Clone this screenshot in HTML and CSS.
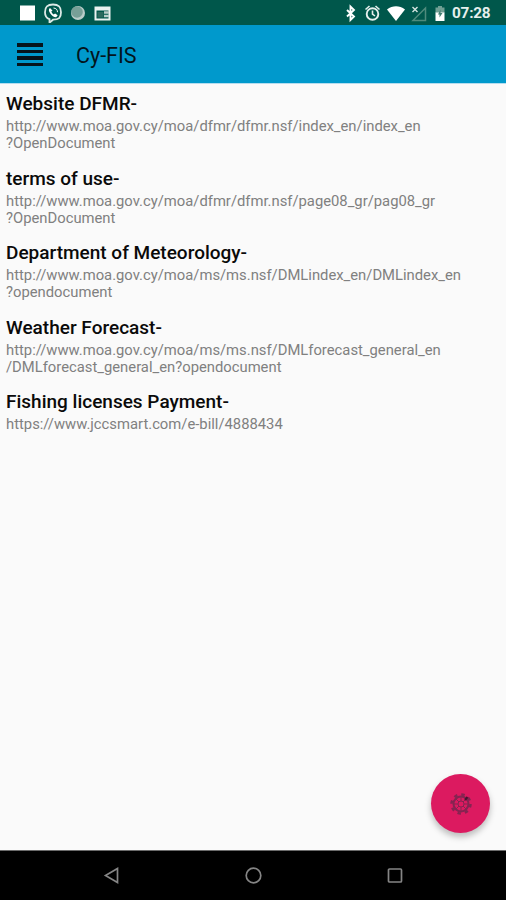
FILE: index.html
```
<!DOCTYPE html>
<html lang="en">
<head>
    <meta charset="UTF-8">
    <meta name="viewport" content="width=device-width, initial-scale=1.0">
    <title>Cy-FIS</title>
    <link rel="stylesheet" href="styles.css">
</head>
<body>

<div class="status-bar">
    <svg class="status-left" width="95" height="20" viewBox="0 0 95 20">
        <rect x="0" y="2.500" width="15" height="15" fill="#fff"/>
        <!-- viber -->
        <path d="M33 1.500c5.800 0 8 2.200 8 7.800s-2.200 7.400-8 7.400l-3.500 3v-3.600c-3.300-.900-4.500-3-4.500-6.800 0-5.600 2.200-7.800 8-7.800z" fill="none" stroke="#dce9e6" stroke-width="1.800"/>
        <path d="M30 5c-1.800 1-1.300 3.200.3 5.400s3.900 4.200 5.900 3.900l1.500-2-2.600-1.900-1.400 1c-1.200-.7-2-1.700-2.400-2.900l1.200-1z" fill="#fff"/>
        <path d="M33.500 5c2.500.2 4 1.600 4 4.200" fill="none" stroke="#fff"/>
        <circle cx="58" cy="10" r="7" fill="#b9cdc9"/>
        <circle cx="57" cy="9" r="5.800" fill="#77a097"/>
        <!-- news -->
        <rect x="75.500" y="4.500" width="14" height="12" fill="none" stroke="#eaf2f0" stroke-width="2"/>
        <path d="M75 6h15" stroke="#eaf2f0" stroke-width="3"/>
        <rect x="77.500" y="9" width="6" height="5.500" fill="#2c6a5e"/>
        <path d="M84 9.500h5M84 13h5" stroke="#b9cdc9" stroke-width="2.500"/>
    </svg>
    <div class="status-right">
        <svg width="101" height="20" viewBox="0 0 101 20">
            <path d="M2 7l7 6.500-3.500 3.500V3.500L9 7l-7 6.500" fill="none" stroke="#fff" stroke-width="1.900"/>
            <!-- alarm -->
            <circle cx="27.500" cy="11" r="5.800" fill="none" stroke="#e6efed" stroke-width="1.900"/>
            <path d="M27.500 7.500V11l2.500 2M20.500 6.500l4-3.500M34.500 6.500l-4-3.500" fill="none" stroke="#e6efed" stroke-width="1.600"/>
            <!-- wifi -->
            <path d="M42 6.500c5.500-4.300 12.500-4.300 18 0L51 18z" fill="#fff"/>
            <!-- no signal -->
            <path d="M80.500 5v12.500H68z" fill="none" stroke="#4f8a7c" stroke-width="1.500"/>
            <path d="M67.500 4l5 5M72.500 4l-5 5" stroke="#d5e4e1" stroke-width="1.400"/>
            <!-- battery -->
            <path d="M90.500 4.500h2.500V3h4v1.500h2.500V10h-9z" fill="#709f94"/>
            <path d="M90.500 9.500h9V18h-9z" fill="#fff"/>
            <path d="M95.500 6.500l-2.500 5h1.500v3l3-4.500h-2z" fill="#3e7d70"/>
        </svg>
        <span class="clock">07:28</span>
    </div>
</div>

<div class="app-bar">
    <div class="menu-icon">
        <span></span>
        <span></span>
        <span></span>
        <span></span>
    </div>
    <div class="app-title">Cy-FIS</div>
</div>

<div class="content">
    <div class="item">
        <div class="item-title">Website DFMR-</div>
        <div class="item-url">http://www.moa.gov.cy/moa/dfmr/dfmr.nsf/index_en/index_en<br>?OpenDocument</div>
    </div>
    <div class="item">
        <div class="item-title">terms of use-</div>
        <div class="item-url">http://www.moa.gov.cy/moa/dfmr/dfmr.nsf/page08_gr/pag08_gr<br>?OpenDocument</div>
    </div>
    <div class="item">
        <div class="item-title">Department of Meteorology-</div>
        <div class="item-url">http://www.moa.gov.cy/moa/ms/ms.nsf/DMLindex_en/DMLindex_en<br>?opendocument</div>
    </div>
    <div class="item">
        <div class="item-title">Weather Forecast-</div>
        <div class="item-url">http://www.moa.gov.cy/moa/ms/ms.nsf/DMLforecast_general_en<br>/DMLforecast_general_en?opendocument</div>
    </div>
    <div class="item">
        <div class="item-title">Fishing licenses Payment-</div>
        <div class="item-url">https://www.jccsmart.com/e-bill/4888434</div>
    </div>

    <div class="fab">
        <svg width="24" height="24" viewBox="0 0 24 24" fill="none" stroke="#852451">
            <circle cx="12" cy="12" r="7.500" stroke-width="2"/>
            <circle cx="12" cy="12" r="9.500" stroke-width="2.500" stroke-dasharray="3.460 4"/>
            <circle cx="12" cy="12" r="3"/>
            <path d="M12 4v5M12 15v5M4 12h5M15 12h5M6.500 6.500l3.500 3.500M14 14l3.500 3.500M17.500 6.500L14 10M10 14l-3.500 3.500"/>
            <path d="M16 8l2.500-3" stroke="#421630" stroke-width="2"/>
        </svg>
    </div>
</div>

<div class="nav-bar">
    <svg width="18" height="18" viewBox="0 0 18 18"><path d="M15.500 1.500v14L3.500 8.500z"/></svg>
    <svg width="18" height="18" viewBox="0 0 18 18"><circle cx="9.500" cy="8.500" r="7.300"/></svg>
    <svg width="18" height="18" viewBox="0 0 18 18"><rect x="2.500" y="2" width="13" height="13" rx="1"/></svg>
</div>

</body>
</html>
```
FILE: styles.css
```
body {
    margin: 0;
    height: 900px;
    display: flex;
    flex-direction: column;
    overflow: hidden;
    background: #fafafa;
    font-family: Roboto, sans-serif;
}
.status-bar {
    height: 25px;
    padding: 0 16px 0 20px;
    display: flex;
    justify-content: space-between;
    align-items: center;
    background: #00574b;
}
.status-left {
    margin-top: 1px;
}
.status-right {
    display: flex;
    align-items: center;
    gap: 6px;
}
.clock {
    width: 38px;
    color: #e6efed;
    font-size: 15.3px;
    font-weight: 700;
    line-height: 25px;
    letter-spacing: -0.2px;
    margin-top: 2px;
}
.app-bar {
    height: 58px;
    padding-left: 17px;
    display: flex;
    align-items: center;
    gap: 33px;
    background: #0099cc;
    border-bottom: 1px solid #b5ddef;
}
.menu-icon {
    width: 26px;
    display: flex;
    flex-direction: column;
    gap: 3px;
    margin-top: 1px;
}
.menu-icon span {
    height: 3.5px;
    background: #06141b;
}
.app-title {
    font-size: 21.5px;
    color: #03141c;
    margin-top: 2px;
}
.content {
    position: relative;
    flex: 1;
    padding: 7px 6px 0;
}
.item {
    height: 74.5px;
}
.item-title {
    font-size: 19px;
    font-weight: 500;
    line-height: 25px;
    color: #0a0a0a;
}
.item-url {
    font-size: 14.8px;
    line-height: 17.3px;
    margin-top: 2px;
    color: #808080;
    white-space: nowrap;
}
.fab {
    position: absolute;
    right: 16px;
    bottom: 17px;
    width: 59px;
    height: 59px;
    border-radius: 50%;
    display: flex;
    align-items: center;
    justify-content: center;
    background: #dc1a60;
    box-shadow: 0 4px 6px rgba(0, 0, 0, 0.25);
}
.nav-bar {
    height: 49px;
    padding: 0 102px;
    display: flex;
    justify-content: space-between;
    align-items: center;
    background: #000;
    border-top: 1px solid #6b6b6b;
}
.nav-bar svg {
    fill: none;
    stroke: #858585;
    stroke-width: 1.7;
}
```
